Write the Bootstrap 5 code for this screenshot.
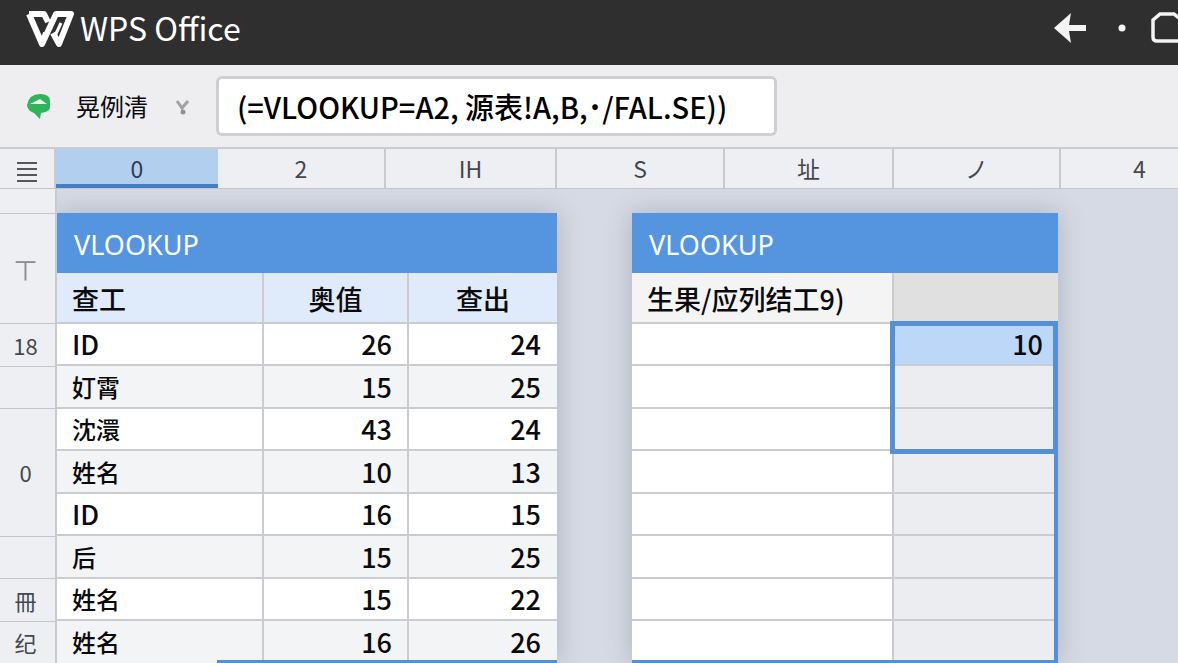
<!DOCTYPE html>
<html lang="zh-CN">
<head>
<meta charset="utf-8">
<meta name="viewport" content="width=device-width, initial-scale=1">
<title>WPS Office</title>
<link href="https://cdn.jsdelivr.net/npm/bootstrap@5.3.0/dist/css/bootstrap.min.css" rel="stylesheet">
<style>
  body { font-family: "Noto Sans CJK SC", sans-serif; background: #d5dae4; color: #0b0b0d; overflow-x: hidden; }
  .topbar { height: 65px; background: #2f2f2f; overflow: hidden; }
  .brand-name { font-size: 32px; line-height: 40px; color: #fff; }
  .toolbar { height: 82px; background: #eeeef1; }
  .sheet-name { font-size: 24px; line-height: 36px; }
  .formula { height: 60px; width: 561px; border: 3px solid #cfcfd2; border-radius: 6px; font-size: 29px; font-weight: 500; color: #000; background: #fff; padding: 0 18px; }
  .col-heads { display: grid; grid-template-columns: 56px 162fr 168fr 171fr 168fr 169fr 167fr 117fr; grid-template-rows: 39px; height: 42px; background: #edeff3; border-top: 2px solid #cbccd0; border-bottom: 1px solid #c4c6cb; color: #45474c; font-size: 23px; line-height: 38px; text-align: center; }
  .col-heads > * { border-right: 2px solid #c9cace; }
  .col-heads > :last-child { border-right: 0; }
  .col-heads .active-col { background: #b3cfef; border-right: 0; box-shadow: inset 0 -4px #447fc4; color: #2c3c55; }
  .row-heads { width: 57px; background: #edeff3; border-right: 2px solid #c9cace; color: #45474c; font-size: 22px; z-index: 1; }
  .row-heads > div { height: 42px; border-bottom: 1px solid #c4c6cb; display: flex; align-items: center; justify-content: center; padding-right: 4px; }
  .row-heads > .gap-head { height: 25px; }
  .row-heads > .title-head { height: 110px; color: #8a8c90; }
  .row-heads > .tall-head { height: 128px; }
  .row-heads > .odd-head { height: 43px; }
  .canvas-area { display: grid; grid-template-columns: 500fr 75fr 426fr 120fr; padding-top: 24px; align-items: start; }
  .panel { box-shadow: 0 0 24px rgba(70, 76, 100, .28); }
  .second { grid-column: 3; }
  .panel-title { height: 60px; background: #5595e0; color: #fff; font-family: "Noto Sans", "Noto Sans CJK SC", sans-serif; font-size: 27px; font-weight: 400; line-height: 63px; padding-left: 17px; margin: 0; }
  .grid-table { width: 100%; table-layout: fixed; border-collapse: separate; border-spacing: 0; font-size: 27px; line-height: 36px; font-weight: 500; background: #fff; }
  .grid-table th { height: 51px; padding: 3px 15px 0; background: #dfeafb; font-weight: 500; text-align: center; border-bottom: 2px solid #cbccd0; }
  .grid-table td { height: 42px; padding: 0 16px; text-align: right; border-bottom: 2px solid #cbccd0; }
  .grid-table tr:nth-child(even) td { height: 43px; }
  .grid-table tr:last-child td { height: 42px; border-bottom-width: 0; }
  .grid-table th + th, .grid-table td + td { border-left: 2px solid #cbccd0; }
  .grid-table th:first-child, .grid-table td:first-child { text-align: left; padding-left: 15px; }
  .grid-table td.cjk { font-size: 24px; }
  .grid-table tr > :nth-child(2) { padding-right: 15px; }
  .source tr:nth-child(even) td { background: #f3f4f6; }
  .result th { background: #f4f4f5; }
  .result th:last-child { background: #e0e0e1; }
  .result td:last-child { background: #ecedf1; }
  .result td.picked { background: #bdd7f9; }
  .pick-frame { top: -3px; left: -4px; right: 0; height: 133px; border: 5px solid #5590d2; pointer-events: none; }
  .range-line { left: 32%; right: 0; bottom: 0; height: 3px; background: #5590d2; }
  .range-frame { left: 0; right: 0; bottom: 0; top: 113px; border: solid #5590d2; border-width: 0 4px 3px 0; pointer-events: none; }
</style>
</head>
<body>
<header class="topbar d-flex align-items-center justify-content-between">
  <div class="d-flex align-items-center ps-4 pb-2">
    <svg width="52" height="40" viewBox="0 0 52 40" aria-hidden="true"><path d="M5 5 H20 L24 13 M5 5 L18 35 L32 5 H47 L35 35 L29 24 M18 35 L22 24" fill="none" stroke="#fff" stroke-width="6" stroke-linejoin="round"/><path d="M37 14 L30 29" stroke="#fff" stroke-width="3"/></svg>
    <span class="brand-name ms-1 pb-1">WPS Office</span>
  </div>
  <div class="d-flex align-items-center pb-2">
    <svg width="124" height="36" viewBox="0 0 124 36" aria-label="窗口控制"><path d="M0 17 L17 2 L15 14 H32 V20 H15 L17 32Z" fill="#f4f4f4"/><circle cx="68" cy="17" r="3.500" fill="#f4f4f4"/><path d="M126 8 L120 3 H106 L99 9 V26 Q99 30 103 30 H126" fill="none" stroke="#f4f4f4" stroke-width="3.500"/></svg>
  </div>
</header>
<section class="toolbar d-flex align-items-center">
  <svg class="ms-4 me-4" width="28" height="28" viewBox="0 0 28 28" aria-hidden="true"><path d="M3 13 Q5 2 16 2 Q26 2 26 9 V16 Q25 20 17 21 L16 27 L10 21 Q3 18 3 13Z" fill="#2fb457"/><path d="M6 12 L16 7 L23 12Z" fill="#e4f4e8"/></svg>
  <span class="sheet-name">晃例清</span>
  <button class="btn p-0 border-0 ms-4 me-4" type="button" aria-label="展开"><svg width="20" height="20" viewBox="0 0 20 20"><path d="M5 3 L10 10 L16 3" fill="none" stroke="#a0a1a5" stroke-width="3"/><circle cx="11" cy="14" r="2.500" fill="#929397"/></svg></button>
  <input class="formula" type="text" aria-label="公式" value="(=VLOOKUP=A2, 源表!A,B,˙/FAL.SE))">
</section>
<div class="col-heads">
  <div><svg width="22" height="24" viewBox="0 0 22 24" aria-hidden="true"><path d="M1 3H21M1 9H21M1 15H21M1 21H21" stroke="#55565a" stroke-width="2"/></svg></div>
  <div class="active-col">0</div><div>2</div><div>IH</div><div>S</div><div>址</div><div>ノ</div><div class="text-start"><span class="ps-4 ms-5">4</span></div>
</div>
<main class="d-flex">
  <div class="row-heads flex-shrink-0">
    <div class="gap-head"></div><div class="title-head">丅</div><div class="odd-head">18</div><div></div><div class="tall-head">0</div><div></div><div class="odd-head">冊</div><div>纪</div>
  </div>
  <div class="canvas-area flex-grow-1">
    <section class="panel position-relative">
      <h2 class="panel-title">VLOOKUP</h2>
      <table class="grid-table source">
        <colgroup><col style="width:41%"><col style="width:29%"><col style="width:30%"></colgroup>
        <thead><tr><th>查工</th><th>奥值</th><th>查出</th></tr></thead>
        <tbody>
          <tr><td>ID</td><td>26</td><td>24</td></tr>
          <tr><td class="cjk">奵霄</td><td>15</td><td>25</td></tr>
          <tr><td class="cjk">沈澴</td><td>43</td><td>24</td></tr>
          <tr><td class="cjk">姓名</td><td>10</td><td>13</td></tr>
          <tr><td>ID</td><td>16</td><td>15</td></tr>
          <tr><td class="cjk">后</td><td>15</td><td>25</td></tr>
          <tr><td class="cjk">姓名</td><td>15</td><td>22</td></tr>
          <tr><td class="cjk">姓名</td><td>16</td><td>26</td></tr>
        </tbody>
      </table>
      <div class="range-line position-absolute"></div>
    </section>
    <section class="panel second position-relative">
      <h2 class="panel-title">VLOOKUP</h2>
      <table class="grid-table result">
        <colgroup><col style="width:61%"><col style="width:39%"></colgroup>
        <thead><tr><th class="text-nowrap">生果/应列结工9)</th><th></th></tr></thead>
        <tbody>
          <tr><td></td><td class="picked position-relative">10<div class="pick-frame position-absolute"></div></td></tr>
          <tr><td></td><td></td></tr>
          <tr><td></td><td></td></tr>
          <tr><td></td><td></td></tr>
          <tr><td></td><td></td></tr>
          <tr><td></td><td></td></tr>
          <tr><td></td><td></td></tr>
          <tr><td></td><td></td></tr>
        </tbody>
      </table>
      <div class="range-frame position-absolute"></div>
    </section>
  </div>
</main>
<script src="https://cdn.jsdelivr.net/npm/bootstrap@5.3.0/dist/js/bootstrap.bundle.min.js"></script>
</body>
</html>
